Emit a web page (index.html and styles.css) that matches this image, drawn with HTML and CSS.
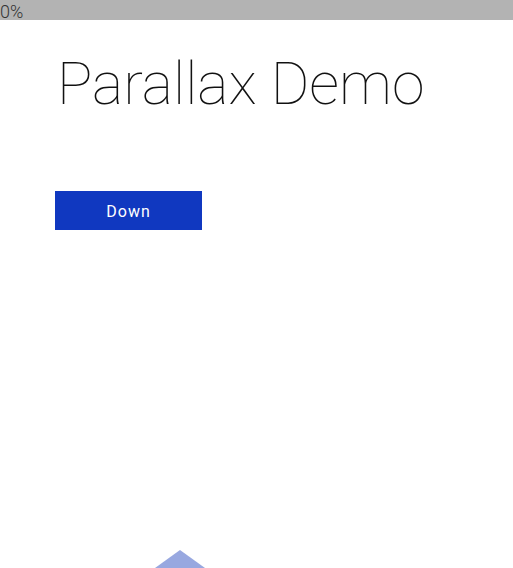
FILE: index.html
```html
<!DOCTYPE html>
<html>
<head>
<meta charset="utf-8">
<link rel="stylesheet" href="styles.css">
</head>
<body>
<div class="progress">0%</div>
<main class="content">
  <h1 class="title">Parallax Demo</h1>
  <button class="down">Down</button>
</main>
<svg class="shape" width="60" height="20" viewBox="0 0 60 20"><polygon points="30,0 55,18 55,20 5,20 5,18" fill="#98a8e0"/></svg>
</body>
</html>
```
FILE: styles.css
```css
html, body {
  margin: 0;
  padding: 0;
  background: #fff;
  height: 100%;
  overflow: hidden;
}
body {
  font-family: Roboto, "Liberation Sans", sans-serif;
  position: relative;
}
.progress {
  height: 20px;
  background: #b3b3b3;
  color: #333;
  font-size: 18px;
  font-weight: 300;
  line-height: 23px;
}
.content {
  padding-left: 55px;
}
.title {
  margin: 29px 0 0 2px;
  font-weight: 100;
  font-size: 59px;
  line-height: 70px;
  color: #111;
}
.down {
  display: block;
  margin-top: 72px;
  width: 147px;
  height: 39px;
  border: none;
  background: #1038c0;
  color: #fff;
  font-family: Roboto, "Liberation Sans", sans-serif;
  font-size: 16px;
  font-weight: 400;
  letter-spacing: 1px;
  line-height: 41px;
  padding: 0;
}
.shape {
  position: absolute;
  left: 150px;
  top: 550px;
  display: block;
}
```
